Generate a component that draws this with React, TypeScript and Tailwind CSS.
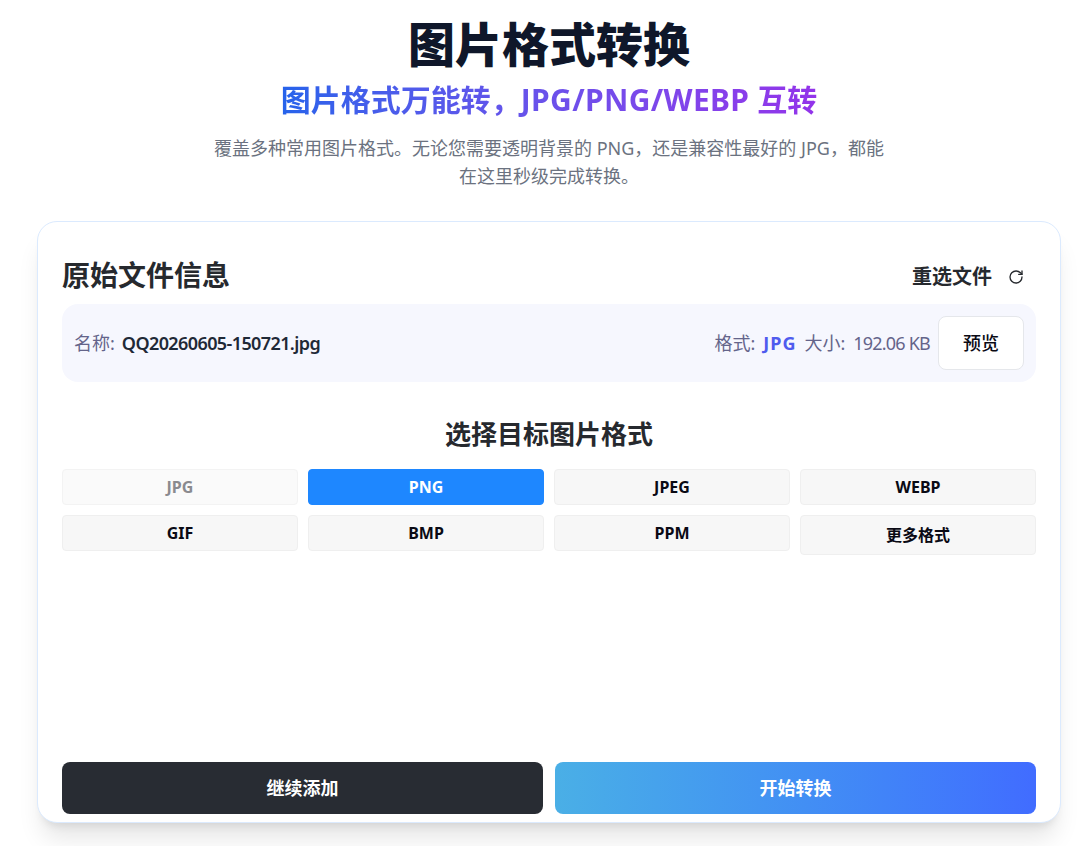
import { RotateCw } from "lucide-react";

const FORMATS = ["JPG", "PNG", "JPEG", "WEBP", "GIF", "BMP", "PPM"];

function formatClass(name: string) {
  if (name === "PNG") return "border-[#1e87ff] bg-[#1e87ff] text-white";
  if (name === "JPG") return "border-[#f3f3f3] bg-[#fafafa] text-[#8a8a8f]";
  return "border-[#efefef] bg-[#f7f7f7] text-[#0a0a14]";
}

export default function App() {
  return (
    <div className="h-[846px] overflow-hidden bg-white font-['Noto_Sans','Noto_Sans_CJK_SC',sans-serif]">
      <div className="ml-[37px] w-[1024px]">
        {/* Header */}
        <div className="flex flex-col items-center pt-[14px]">
          <h1 className="text-[47px] leading-[60px] font-black text-[#0f172a]">图片格式转换</h1>
          <h2 className="mt-[3px] bg-gradient-to-r from-[#2563eb] to-[#9333ea] bg-clip-text text-[30px] leading-[46px] font-bold text-transparent">
            图片格式万能转，<span className="tracking-[0.35px]">JPG/PNG/WEBP</span> 互转
          </h2>
          <p className="mt-[11px] w-[672px] text-center text-[18px] leading-[28px] text-[#6b7280]">
            覆盖多种常用图片格式。无论您需要透明背景的 PNG，还是兼容性最好的 JPG，都能在这里秒级完成转换。
          </p>
        </div>

        {/* Main card */}
        <div className="mt-[31px] flex h-[602px] flex-col rounded-[20px] border border-blue-100 bg-white px-[24px] pt-[32px] pb-[8px] shadow-xl">
          <div className="flex h-[42px] items-center justify-between">
            <span className="text-[28px] font-bold text-[#26292e]">原始文件信息</span>
            <div className="flex items-center gap-[16px] pt-[3px] pr-[12px]">
              <span className="text-[20px] font-bold text-[#26292e]">重选文件</span>
              <RotateCw size={16} className="text-[#26292e]" />
            </div>
          </div>

          <div className="mt-[8px] flex h-[78px] items-center justify-between rounded-[16px] bg-[#f6f7fe] px-[12px] text-[18px]">
            <div className="flex items-center gap-[7px]">
              <span className="text-[#64648a]">名称:</span>
              <span className="font-semibold tracking-[-0.6px] text-[#1f2937]">QQ20260605-150721.jpg</span>
            </div>
            <div className="flex items-center gap-[8px]">
              <span className="text-[#64648a]">格式:</span>
              <span className="font-bold tracking-[1px] text-[#4f5bee]">JPG</span>
              <span className="text-[#64648a]">大小:</span>
              <span className="tracking-[-0.8px] text-[#64648a]">192.06 KB</span>
              <button className="h-[54px] w-[86px] rounded-[8px] border border-[#e5e7eb] bg-white font-medium text-[#0a0a14]">
                预览
              </button>
            </div>
          </div>

          <h3 className="mt-[32px] text-center text-[26px] leading-[40px] font-bold text-[#26292e]">选择目标图片格式</h3>

          <div className="mt-[15px] grid grid-cols-4 items-start gap-[10px]">
            {FORMATS.map((name) => (
              <button
                key={name}
                className={`h-[36px] rounded-[4px] border text-[16px] font-bold ${formatClass(name)}`}
              >
                {name}
              </button>
            ))}
            <button className="h-[40px] rounded-[4px] border border-[#efefef] bg-[#f7f7f7] text-[16px] font-bold text-[#0a0a14]">
              更多格式
            </button>
          </div>

          <div className="mt-auto grid grid-cols-2 gap-[12px]">
            <button className="h-[52px] rounded-[8px] bg-[#282c33] text-[18px] font-semibold text-white">继续添加</button>
            <button className="h-[52px] rounded-[8px] bg-gradient-to-r from-[#4aafe6] to-[#416cff] text-[18px] font-semibold text-white">
              开始转换
            </button>
          </div>
        </div>
      </div>
    </div>
  );
}
